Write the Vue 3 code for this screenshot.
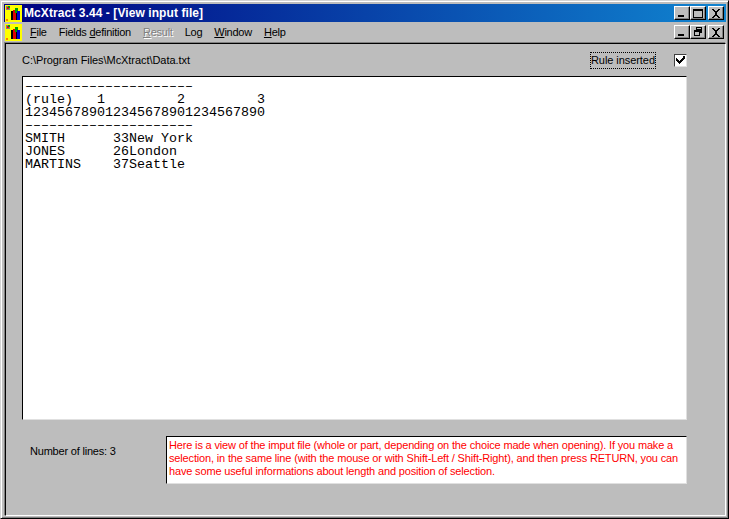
<script setup>
const menus = [
  { pre: '', key: 'F', post: 'ile' },
  { pre: 'Fields ', key: 'd', post: 'efinition' },
  { pre: '', key: 'R', post: 'esult', off: true },
  { pre: 'L', key: '', post: 'og' },
  { pre: '', key: 'W', post: 'indow' },
  { pre: '', key: 'H', post: 'elp' },
]
const rule = '–'.repeat(21)
const code = `${rule}
(rule)   1         2         3
123456789012345678901234567890
${rule}
SMITH      33New York
JONES      26London
MARTINS    37Seattle`
</script>

<template>
  <div class="window">
    <div class="title">
      <svg class="icon" width="17" height="17" viewBox="0 0 17 17" shape-rendering="crispEdges">
        <rect width="17" height="17" fill="#ffff00" />
        <rect x="1" y="1" width="4" height="4" fill="#808080" />
        <rect x="2" y="2" width="2" height="2" fill="#ff0000" />
        <rect x="3" y="1" width="2" height="2" fill="#00a000" />
        <rect x="6" y="6" width="2" height="9" fill="#000" />
        <rect x="8" y="5" width="3" height="10" fill="#e00000" />
        <rect x="10" y="3" width="3" height="5" fill="#00a000" />
        <rect x="11" y="8" width="1" height="7" fill="#000" />
        <rect x="12" y="6" width="3" height="9" fill="#0000d0" />
        <rect x="1" y="14" width="2" height="2" fill="#ff8000" />
      </svg>
      <span class="title-text">McXtract 3.44 - [View input file]</span>
      <div class="btns">
        <button class="cap"><i class="min"></i></button>
        <button class="cap"><i class="max"></i></button>
        <button class="cap close">
          <svg width="10" height="9" viewBox="0 0 10 9" shape-rendering="crispEdges"><path d="M1 0h2v1h1v1h2V1h1V0h2v1H8v1H7v1H6v3h1v1h1v1h1v1H7V8H6V7H4v1H3v1H1V8h1V7h1V6h1V3H3V2H2V1H1z" fill="#000" /></svg>
        </button>
      </div>
    </div>
    <div class="menubar">
      <svg class="icon" width="17" height="17" viewBox="0 0 17 17" shape-rendering="crispEdges">
        <rect width="17" height="17" fill="#ffff00" />
        <rect x="1" y="1" width="4" height="4" fill="#808080" />
        <rect x="2" y="2" width="2" height="2" fill="#ff0000" />
        <rect x="3" y="1" width="2" height="2" fill="#00a000" />
        <rect x="6" y="6" width="2" height="9" fill="#000" />
        <rect x="8" y="5" width="3" height="10" fill="#e00000" />
        <rect x="10" y="3" width="3" height="5" fill="#00a000" />
        <rect x="11" y="8" width="1" height="7" fill="#000" />
        <rect x="12" y="6" width="3" height="9" fill="#0000d0" />
        <rect x="1" y="14" width="2" height="2" fill="#ff8000" />
      </svg>
      <nav class="menus">
        <span v-for="m in menus" :key="m.post" class="menu" :class="{ off: m.off }">{{ m.pre }}<u v-if="m.key">{{ m.key }}</u>{{ m.post }}</span>
      </nav>
      <div class="btns">
        <button class="cap"><i class="min"></i></button>
        <button class="cap">
          <svg width="10" height="10" viewBox="0 0 10 10" shape-rendering="crispEdges"><path d="M3 0h6v6H7v3H1V3h2zM4 1v1h4V1zM2 5v3h4V5z" fill="#000" fill-rule="evenodd" /></svg>
        </button>
        <button class="cap close">
          <svg width="10" height="9" viewBox="0 0 10 9" shape-rendering="crispEdges"><path d="M1 0h2v1h1v1h2V1h1V0h2v1H8v1H7v1H6v3h1v1h1v1h1v1H7V8H6V7H4v1H3v1H1V8h1V7h1V6h1V3H3V2H2V1H1z" fill="#000" /></svg>
        </button>
      </div>
    </div>
    <div class="client">
      <div class="top">
        <span class="path">C:\Program Files\McXtract\Data.txt</span>
        <label class="rule">Rule inserted</label>
        <span class="check">
          <svg width="9" height="8" viewBox="0 0 9 8" shape-rendering="crispEdges"><path d="M7 0h2v3H8v1H7v1H6v1H5v1H4v1H3V7H2V6H1V5H0V2h1v1h1v1h1v1h1V4h1V3h1V2h1z" fill="#000" /></svg>
        </span>
      </div>
      <pre class="editor">{{ code }}</pre>
      <div class="bottom">
        <span class="lines">Number of lines: 3</span>
        <div class="note">Here is a view of the imput file (whole or part, depending on the choice made when opening). If you make a selection, in the same line (with the mouse or with Shift-Left / Shift-Right), and then press RETURN, you can have some useful informations about length and position of selection.</div>
      </div>
    </div>
  </div>
</template>

<style scoped>
.window {
  box-sizing: border-box;
  width: 729px;
  height: 519px;
  display: flex;
  flex-direction: column;
  background: #bdbdbd;
  border: 1px solid;
  border-color: #d4d4d4 #000 #000 #d4d4d4;
  box-shadow: inset 1px 1px 0 #fff, inset -1px -1px 0 #808080;
  padding: 3px 2px 2px 3px;
  font-family: "Liberation Sans", Arial, sans-serif;
  font-size: 11px;
  color: #000;
}
.title {
  height: 18px;
  flex: none;
  display: flex;
  align-items: center;
  background: linear-gradient(90deg, #000080, #1084d0);
  color: #fff;
}
.title .icon { margin-left: 1px; }
.title-text {
  margin-left: 2px;
  font-weight: 700;
  font-size: 12px;
  letter-spacing: 0.08px;
  white-space: nowrap;
}
.btns {
  margin-left: auto;
  display: flex;
  margin-right: 2px;
}
.cap {
  box-sizing: border-box;
  width: 16px;
  height: 14px;
  padding: 0;
  background: #bdbdbd;
  border: 1px solid;
  border-color: #fff #000 #000 #fff;
  box-shadow: inset -1px -1px 0 #808080;
  display: flex;
  align-items: center;
  justify-content: center;
  position: relative;
}
.close { margin-left: 2px; }
.min {
  display: block;
  width: 6px;
  height: 2px;
  background: #000;
  margin-top: 6px;
  margin-right: 2px;
}
.max {
  display: block;
  box-sizing: border-box;
  width: 10px;
  height: 9px;
  border: 1px solid #000;
  border-top-width: 2px;
}
.menubar {
  height: 20px;
  flex: none;
  display: flex;
  align-items: center;
  box-sizing: border-box;
}
.menubar .icon { margin-left: 1px; }
.menus {
  display: flex;
  margin-left: 8px;
  gap: 12px;
  font-size: 11px;
  letter-spacing: -0.25px;
  white-space: nowrap;
}
.off {
  color: #808080;
  text-shadow: 1px 1px 0 #fff;
}
.client {
  flex: 1;
  min-height: 0;
  display: flex;
  flex-direction: column;
  box-sizing: border-box;
  border: 1px solid;
  border-color: #000 #fff #fff #000;
  box-shadow: -1px -1px 0 #808080;
  margin: 1px 0 0 1px;
  padding: 0 38px 0 16px;
}
.top {
  height: 32px;
  flex: none;
  display: flex;
  align-items: center;
}
.path {
  white-space: nowrap;
  letter-spacing: -0.06px;
}
.rule {
  margin-left: auto;
  outline: 1px dotted #000;
  line-height: 15px;
  letter-spacing: -0.06px;
  white-space: nowrap;
}
.check {
  box-sizing: border-box;
  width: 13px;
  height: 13px;
  margin: 0 0 0 19px;
  background: #fff;
  border: 1px solid;
  border-color: #404040 #e0e0e0 #e0e0e0 #404040;
  display: flex;
  align-items: center;
  justify-content: center;
}
.editor {
  box-sizing: border-box;
  height: 344px;
  flex: none;
  margin: 0;
  padding: 3px 2px;
  background: #fff;
  border: 1px solid;
  border-color: #000 #e0e0e0 #e0e0e0 #000;
  font-family: "Liberation Mono", "Courier New", monospace;
  font-size: 13.33px;
  line-height: 13px;
  overflow: hidden;
}
.bottom {
  display: flex;
  margin-top: 16px;
}
.lines {
  width: 144px;
  flex: none;
  padding: 8px 0 0 8px;
  box-sizing: border-box;
  line-height: 14px;
  letter-spacing: -0.2px;
}
.note {
  box-sizing: border-box;
  flex: 1;
  height: 48px;
  background: #fff;
  border: 1px solid;
  border-color: #000 #e0e0e0 #e0e0e0 #000;
  padding: 2px 2px;
  color: #f00;
  font-size: 11px;
  letter-spacing: -0.16px;
  line-height: 13px;
}
</style>
